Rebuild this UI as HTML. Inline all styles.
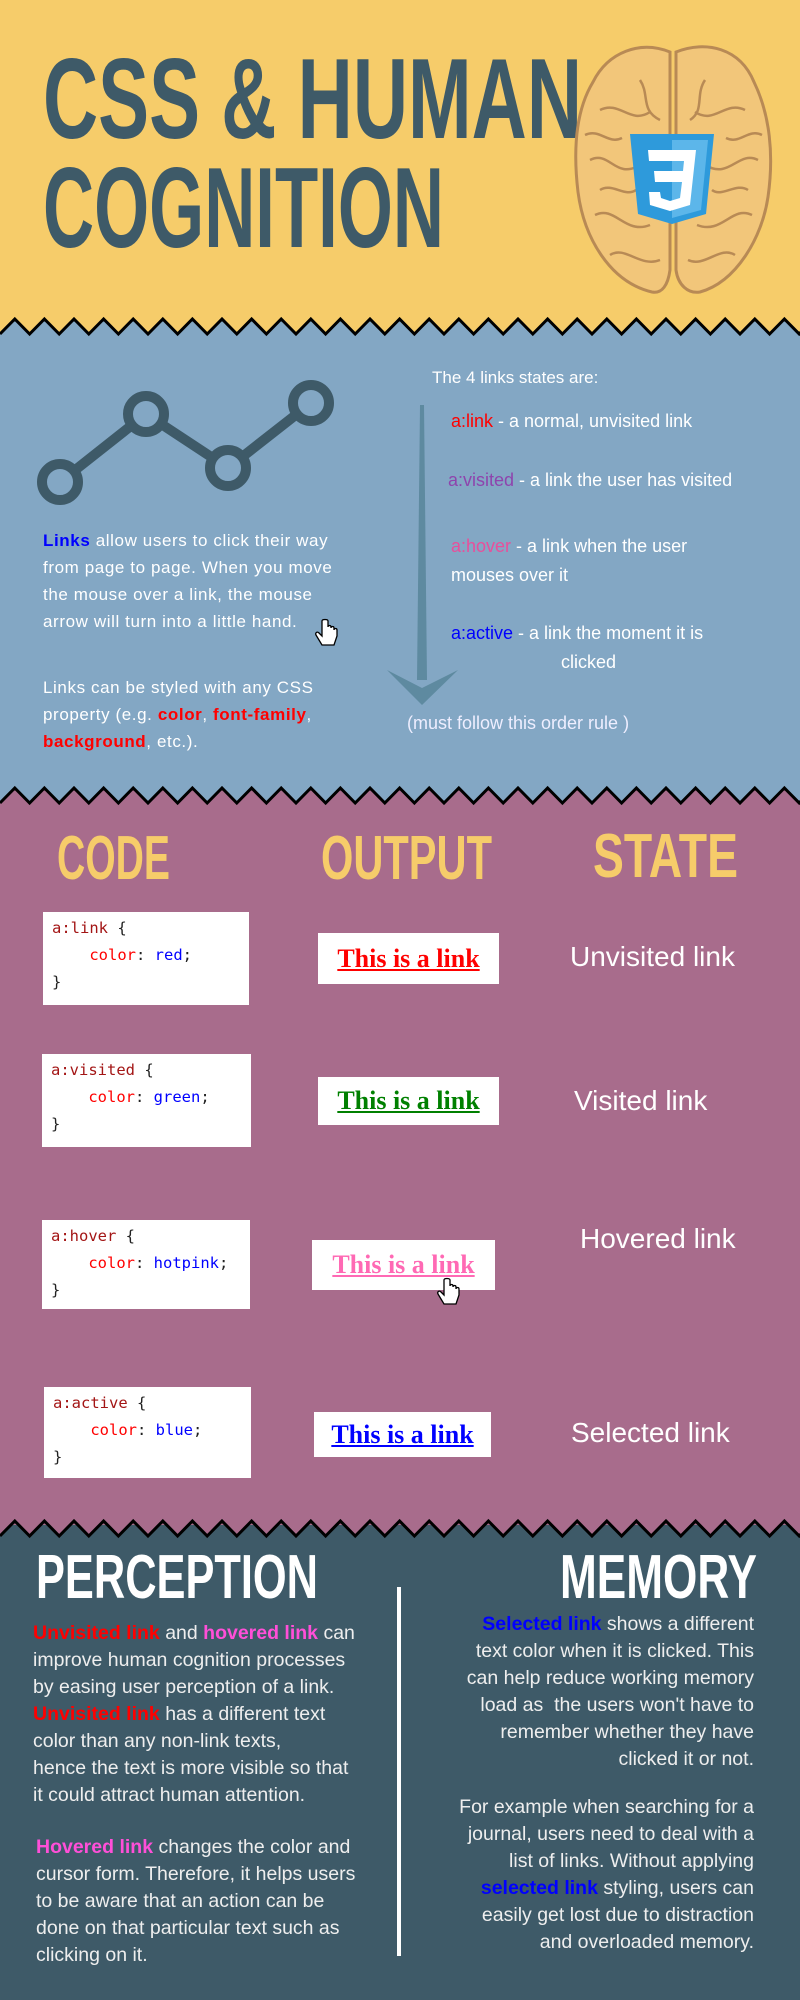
<!DOCTYPE html>
<html><head><meta charset="utf-8"><style>
*{margin:0;padding:0;box-sizing:border-box}
body{width:800px;height:2000px;position:relative;overflow:hidden;font-family:"Liberation Sans",sans-serif}
.a{position:absolute;white-space:nowrap}
.sec{position:absolute;left:0;width:800px}
.t2{color:#fff;font-size:17px;letter-spacing:0.6px;line-height:27px}
.code{position:absolute;background:#fff;font-family:"DejaVu Sans Mono","Liberation Mono",monospace;font-size:15.5px;line-height:27px;padding:3px 0 0 9px;color:#222}
.code .k{color:#a31515}.code .p{color:#f00}.code .v{color:#00f}
.out{position:absolute;background:#fff;font-family:"Liberation Serif",serif;font-weight:bold;font-size:26px;text-decoration:underline;text-align:center}
.st{position:absolute;color:#fff;font-size:28px;white-space:nowrap}
.n{font-family:"Liberation Sans Narrow","Liberation Sans",sans-serif;color:#eee;font-size:19.5px;line-height:27px;position:absolute;white-space:nowrap}
</style></head><body>
<div class="sec" style="top:0;height:330px;background:#F6CC6A"></div>
<div class="sec" style="top:320px;height:470px;background:#83A7C4"></div>
<div class="sec" style="top:785px;height:745px;background:#A86C8C"></div>
<div class="sec" style="top:1525px;height:475px;background:#3E5A68"></div>
<svg class="a" style="left:0;top:0" width="800" height="2000">
<defs><g id="z"><polyline fill="none" stroke="#000" stroke-width="3" points="0,15 14.8,0 29.6,15 44.4,0 59.2,15 74,0 88.8,15 103.6,0 118.4,15 133.2,0 148,15 162.8,0 177.6,15 192.4,0 207.2,15 222,0 236.8,15 251.6,0 266.4,15 281.2,0 296,15 310.8,0 325.6,15 340.4,0 355.2,15 370,0 384.8,15 399.6,0 414.4,15 429.2,0 444,15 458.8,0 473.6,15 488.4,0 503.2,15 518,0 532.8,15 547.6,0 562.4,15 577.2,0 592,15 606.8,0 621.6,15 636.4,0 651.2,15 666,0 680.8,15 695.6,0 710.4,15 725.2,0 740,15 754.8,0 769.6,15 784.4,0 799.2,15 814,0"/></g></defs>
<polygon fill="#F6CC6A" points="0,300 800,300 800,334 799.2,334 784.4,319 769.6,334 754.8,319 740,334 725.2,319 710.4,334 695.6,319 680.8,334 666,319 651.2,334 636.4,319 621.6,334 606.8,319 592,334 577.2,319 562.4,334 547.6,319 532.8,334 518,319 503.2,334 488.4,319 473.6,334 458.8,319 444,334 429.2,319 414.4,334 399.6,319 384.8,334 370,319 355.2,334 340.4,319 325.6,334 310.8,319 296,334 281.2,319 266.4,334 251.6,319 236.8,334 222,319 207.2,334 192.4,319 177.6,334 162.8,319 148,334 133.2,319 118.4,334 103.6,319 88.8,334 74,319 59.2,334 44.4,319 29.6,334 14.8,319 0,334"/>
<use href="#z" transform="translate(0,319)"/>
<polygon fill="#83A7C4" points="0,770 800,770 800,803 799.2,803 784.4,788 769.6,803 754.8,788 740,803 725.2,788 710.4,803 695.6,788 680.8,803 666,788 651.2,803 636.4,788 621.6,803 606.8,788 592,803 577.2,788 562.4,803 547.6,788 532.8,803 518,788 503.2,803 488.4,788 473.6,803 458.8,788 444,803 429.2,788 414.4,803 399.6,788 384.8,803 370,788 355.2,803 340.4,788 325.6,803 310.8,788 296,803 281.2,788 266.4,803 251.6,788 236.8,803 222,788 207.2,803 192.4,788 177.6,803 162.8,788 148,803 133.2,788 118.4,803 103.6,788 88.8,803 74,788 59.2,803 44.4,788 29.6,803 14.8,788 0,803"/>
<use href="#z" transform="translate(0,788)"/>
<polygon fill="#A86C8C" points="0,1510 800,1510 800,1536 799.2,1536 784.4,1521 769.6,1536 754.8,1521 740,1536 725.2,1521 710.4,1536 695.6,1521 680.8,1536 666,1521 651.2,1536 636.4,1521 621.6,1536 606.8,1521 592,1536 577.2,1521 562.4,1536 547.6,1521 532.8,1536 518,1521 503.2,1536 488.4,1521 473.6,1536 458.8,1521 444,1536 429.2,1521 414.4,1536 399.6,1521 384.8,1536 370,1521 355.2,1536 340.4,1521 325.6,1536 310.8,1521 296,1536 281.2,1521 266.4,1536 251.6,1521 236.8,1536 222,1521 207.2,1536 192.4,1521 177.6,1536 162.8,1521 148,1536 133.2,1521 118.4,1536 103.6,1521 88.8,1536 74,1521 59.2,1536 44.4,1521 29.6,1536 14.8,1521 0,1536"/>
<use href="#z" transform="translate(0,1521)"/>

<g font-family="Liberation Sans, sans-serif" font-weight="bold" fill="#3E5A68" font-size="114">
<text x="43" y="138" textLength="539" lengthAdjust="spacingAndGlyphs">CSS &amp; HUMAN</text>
<text x="43" y="247" textLength="401" lengthAdjust="spacingAndGlyphs">COGNITION</text>
</g>
<g fill="#F2C67A" stroke="#B88A55" stroke-width="3">
<path d="M670,52 C640,40 608,52 593,82 C576,110 573,150 578,192 C584,238 610,282 652,292 C662,294 668,285 670,270 Z"/>
<path d="M676,52 C706,40 740,48 754,82 C770,115 774,155 768,197 C762,238 736,282 700,292 C688,294 678,285 676,270 Z"/>
</g>
<g fill="none" stroke="#B88A55" stroke-width="2.5">
<path d="M600,110 C620,100 630,125 650,112 M590,160 C610,150 615,180 640,165 M595,215 C615,205 625,235 650,225 M610,255 C625,245 640,268 660,260 M640,80 C650,95 640,110 660,120 M585,135 C600,128 608,145 622,138 M600,190 C612,182 625,198 636,190"/>
<path d="M745,110 C725,100 715,125 695,112 M758,160 C738,150 730,180 705,165 M752,215 C732,205 722,235 697,225 M735,255 C720,245 705,268 688,260 M705,80 C695,95 705,110 690,120 M762,135 C748,128 740,145 726,138 M748,190 C736,182 722,198 712,190"/>
</g>
<path d="M630,134 L714,134 L706,214 L672,224 L638,214 Z" fill="#2E9ADB"/>
<path d="M672,140 L708,140 L701,210 L672,218 Z" fill="#5CB6EA"/>
<path d="M648,150 L696,150 L690,205 L670,211 L650,205 L649,192 L660,192 L661,198 L670,201 L680,198 L682,182 L655,182 L654,171 L683,171 L684,161 L649,161 Z" fill="#fff"/>

<g stroke="#3E5A68" stroke-width="10" fill="none">
<polyline points="60,482 146,414 228,468 311,403"/>
</g>
<g stroke="#3E5A68" stroke-width="10" fill="#83A7C4">
<circle cx="60" cy="482" r="18"/><circle cx="146" cy="414" r="18"/><circle cx="228" cy="468" r="18"/><circle cx="311" cy="403" r="18"/>
</g>
<path d="M420,405 L424,405 L427,680 L417,680 Z" fill="#5E8AA0"/>
<path d="M387,670 L422,705 L458,670 L422,688 Z" fill="#5E8AA0"/>
<g fill="#fff" stroke="#000" stroke-width="1.3">
<path d="M322,621 L322,636 L319,633 C317,631 315,633 316,635 L322,645 L334,645 L337,636 L337,630 C337,628 334,628 334,630 L334,628 C334,626 331,626 331,628 L331,627 C331,625 328,625 328,627 L328,621 C328,619 322,619 322,621 Z"/>
</g>
<g font-family="Liberation Sans, sans-serif" font-weight="bold" fill="#F6CC6A" font-size="62">
<text x="57" y="879" textLength="113" lengthAdjust="spacingAndGlyphs">CODE</text>
<text x="321" y="879" textLength="171" lengthAdjust="spacingAndGlyphs">OUTPUT</text>
<text x="593" y="877" textLength="145" lengthAdjust="spacingAndGlyphs">STATE</text>
</g>
<g font-family="Liberation Sans, sans-serif" font-weight="bold" fill="#fff" font-size="62">
<text x="36" y="1598" textLength="282" lengthAdjust="spacingAndGlyphs">PERCEPTION</text>
<text x="560" y="1598" textLength="197" lengthAdjust="spacingAndGlyphs">MEMORY</text>
</g>
<rect x="397" y="1587" width="4" height="369" fill="#fff"/>
</svg>

<div class="a t2" style="left:43px;top:527px"><b style="color:#00f">Links</b> allow users to click their way<br>from page to page. When you move<br>the mouse over a link, the mouse<br>arrow will turn into a little hand.</div>
<div class="a t2" style="left:43px;top:674px">Links can be styled with any CSS<br>property (e.g. <b style="color:#f00">color</b>, <b style="color:#f00">font-family</b>,<br><b style="color:#f00">background</b>, etc.).</div>

<div class="a t2" style="left:432px;top:364px;font-size:17px;letter-spacing:0">The 4 links states are:</div>
<div class="a t2" style="left:451px;top:408px;letter-spacing:0;font-size:18px"><span style="color:#f00">a:link</span> - a normal, unvisited link</div>
<div class="a t2" style="left:448px;top:467px;letter-spacing:0;font-size:18px"><span style="color:#8e44ad">a:visited</span> - a link the user has visited</div>
<div class="a t2" style="left:451px;top:532px;letter-spacing:0;line-height:29px;font-size:18px"><span style="color:#e84f9b">a:hover</span> - a link when the user<br>mouses over it</div>
<div class="a t2" style="left:451px;top:619px;letter-spacing:0;line-height:29px;font-size:18px"><span style="color:#00f">a:active</span> - a link the moment it is<br>&nbsp;&nbsp;&nbsp;&nbsp;&nbsp;&nbsp;&nbsp;&nbsp;&nbsp;&nbsp;&nbsp;&nbsp;&nbsp;&nbsp;&nbsp;&nbsp;&nbsp;&nbsp;&nbsp;&nbsp;&nbsp;&nbsp;clicked</div>
<div class="a t2" style="left:407px;top:710px;color:#eef;letter-spacing:0;font-size:18px">(must follow this order rule )</div>

<div class="code" style="left:43px;top:912px;width:206px;height:93px"><span class="k">a:link</span> {<br>&nbsp;&nbsp;&nbsp;&nbsp;<span class="p">color</span>: <span class="v">red</span>;<br>}</div>
<div class="code" style="left:42px;top:1054px;width:209px;height:93px"><span class="k">a:visited</span> {<br>&nbsp;&nbsp;&nbsp;&nbsp;<span class="p">color</span>: <span class="v">green</span>;<br>}</div>
<div class="code" style="left:42px;top:1220px;width:208px;height:89px"><span class="k">a:hover</span> {<br>&nbsp;&nbsp;&nbsp;&nbsp;<span class="p">color</span>: <span class="v">hotpink</span>;<br>}</div>
<div class="code" style="left:44px;top:1387px;width:207px;height:91px"><span class="k">a:active</span> {<br>&nbsp;&nbsp;&nbsp;&nbsp;<span class="p">color</span>: <span class="v">blue</span>;<br>}</div>

<div class="out" style="left:318px;top:933px;width:181px;height:51px;line-height:51px;color:#f00">This is a link</div>
<div class="out" style="left:318px;top:1077px;width:181px;height:48px;line-height:48px;color:#008000">This is a link</div>
<div class="out" style="left:312px;top:1240px;width:183px;height:50px;line-height:50px;color:#ff69b4">This is a link</div>
<div class="out" style="left:314px;top:1412px;width:177px;height:45px;line-height:45px;color:#00f">This is a link</div>
<svg class="a" style="left:435px;top:1272px" width="32" height="36"><path d="M9,8 L9,23 L6,20 C4,18 2,20 3,22 L9,32 L21,32 L24,23 L24,17 C24,15 21,15 21,17 L21,15 C21,13 18,13 18,15 L18,14 C18,12 15,12 15,14 L15,8 C15,6 9,6 9,8 Z" fill="#fff" stroke="#000" stroke-width="1.3"/></svg>

<div class="st" style="left:570px;top:941px">Unvisited link</div>
<div class="st" style="left:574px;top:1085px">Visited link</div>
<div class="st" style="left:580px;top:1223px">Hovered link</div>
<div class="st" style="left:571px;top:1417px">Selected link</div>

<div class="n" style="left:33px;top:1620px"><b style="color:#f00">Unvisited link</b> and <b style="color:#ff4fd8">hovered link</b> can<br>improve human cognition processes<br>by easing user perception of a link.<br><b style="color:#f00">Unvisited link</b> has a different text<br>color than any non-link texts,<br>hence the text is more visible so that<br>it could attract human attention.</div>
<div class="n" style="left:36px;top:1834px"><b style="color:#ff4fd8">Hovered link</b> changes the color and<br>cursor form. Therefore, it helps users<br>to be aware that an action can be<br>done on that particular text such as<br>clicking on it.</div>
<div class="n" style="right:46px;top:1611px;text-align:right"><b style="color:#00f">Selected link</b> shows a different<br>text color when it is clicked. This<br>can help reduce working memory<br>load as &nbsp;the users won't have to<br>remember whether they have<br>clicked it or not.</div>
<div class="n" style="right:46px;top:1794px;text-align:right">For example when searching for a<br>journal, users need to deal with a<br>list of links. Without applying<br><b style="color:#00f">selected link</b> styling, users can<br>easily get lost due to distraction<br>and overloaded memory.</div>
</body></html>
